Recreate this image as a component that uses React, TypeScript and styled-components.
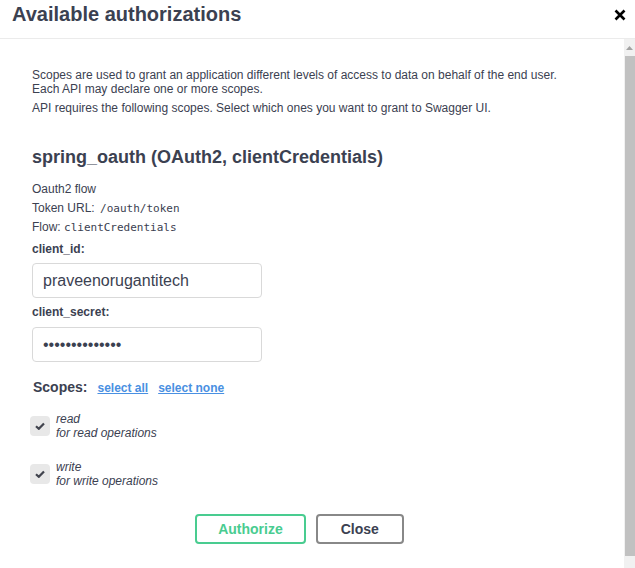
import React from "react";
import styled, { createGlobalStyle, css } from "styled-components";

const GlobalStyle = createGlobalStyle`
  html, body {
    margin: 0;
    padding: 0;
    background: #ffffff;
  }
  body {
    font-family: "Liberation Sans", Arial, sans-serif;
    color: #3b4151;
  }
  * { box-sizing: border-box; }
`;

const Page = styled.div`
  width: 635px;
  height: 568px;
  display: flex;
  flex-direction: column;
  overflow: hidden;
  background: #fff;
`;

const Header = styled.div`
  height: 39px;
  flex: none;
  display: flex;
  justify-content: space-between;
  align-items: flex-start;
  padding: 2px 0 0 12px;
  border-bottom: 1px solid #ebebeb;
`;

const Title = styled.h3`
  margin: 0;
  font-size: 20px;
  line-height: 24px;
  font-weight: 700;
  color: #3b4151;
`;

const CloseIcon = styled.button`
  margin: 7px 9px 0 0;
  padding: 0;
  width: 12px;
  height: 12px;
  border: none;
  background: none;
  display: flex;
  cursor: pointer;
`;

const Body = styled.div`
  flex: 1;
  min-height: 0;
  display: flex;
`;

const Content = styled.div`
  flex: 1;
  padding: 29px 0 0 32px;
  overflow: hidden;
`;

const Para = styled.p<{ $mt?: number }>`
  margin: ${(p) => p.$mt ?? 0}px 0 0;
  font-size: 12px;
  line-height: 14px;
  color: #3b4151;
`;

const SchemeTitle = styled.h4`
  margin: 31px 0 0;
  font-size: 18px;
  line-height: 22px;
  font-weight: 700;
  color: #3b4151;
`;

const FlowInfo = styled.div`
  margin-top: 12px;
  font-size: 12px;
  line-height: 19px;
`;

const FlowLine = styled.div`
  white-space: pre;
`;

const Code = styled.code<{ $pad?: number }>`
  font-family: "DejaVu Sans Mono", "Liberation Mono", monospace;
  font-size: 11px;
  padding-left: ${(p) => p.$pad ?? 0}px;
`;

const FieldLabel = styled.label<{ $mt: number }>`
  display: block;
  margin-top: ${(p) => p.$mt}px;
  font-size: 12px;
  line-height: 14px;
  font-weight: 700;
  color: #3b4151;
`;

const TextInput = styled.input<{ $mt: number }>`
  display: block;
  margin-top: ${(p) => p.$mt}px;
  width: 230px;
  height: 35px;
  padding: 0 10px;
  border: 1px solid #d9d9d9;
  border-radius: 4px;
  background: #fff;
  font-family: "Liberation Sans", Arial, sans-serif;
  font-size: 16px;
  color: #3b4151;
  outline: none;
`;

const ScopesRow = styled.div`
  margin-top: 17px;
  display: flex;
  align-items: baseline;
`;

const ScopesTitle = styled.h2`
  margin: 0 0 0 1px;
  font-size: 14px;
  line-height: 17px;
  font-weight: 700;
  color: #3b4151;
`;

const ScopeLink = styled.a`
  margin-left: 10px;
  font-size: 12px;
  font-weight: 700;
  color: #4990e2;
  text-decoration: underline;
  cursor: pointer;
`;

const ScopeItem = styled.div<{ $mt: number }>`
  margin-top: ${(p) => p.$mt}px;
  display: flex;
  align-items: center;
`;

const CheckBox = styled.span`
  width: 20px;
  height: 20px;
  margin-left: -2px;
  border-radius: 4px;
  background: #e8e8e8;
  display: flex;
  align-items: center;
  justify-content: center;
  flex: none;
`;

const ScopeText = styled.div`
  margin-left: 6px;
  font-size: 12px;
  line-height: 14px;
  font-style: italic;
  color: #3b4151;
`;

const ButtonRow = styled.div`
  margin-top: 26px;
  width: 535px;
  display: flex;
  justify-content: center;
  gap: 10px;
`;

const Btn = styled.button<{ $variant: "authorize" | "close" }>`
  font-family: "Liberation Sans", Arial, sans-serif;
  font-size: 14px;
  line-height: 17px;
  font-weight: 700;
  padding: 5px 21px 4px;
  border-radius: 4px;
  background: transparent;
  border: 2px solid;
  cursor: pointer;
  ${(p) =>
    p.$variant === "authorize"
      ? css`
          color: #49cc90;
          border-color: #49cc90;
        `
      : css`
          color: #3b4151;
          border-color: #888888;
          padding-left: 23px;
          padding-right: 23px;
        `}
`;

const Scrollbar = styled.div`
  width: 11px;
  flex: none;
  display: flex;
  flex-direction: column;
  background: #f1f1f1;
`;

const ScrollArrow = styled.div`
  height: 17px;
  display: flex;
  align-items: center;
  justify-content: center;
`;

const ScrollThumb = styled.div`
  height: 500px;
  margin-left: 1px;
  background: #c1c1c1;
`;

const Check = () => (
  <svg width="10" height="8" viewBox="0 0 10 8">
    <path d="M1 4.2 L3.8 6.8 L9 1.4" fill="none" stroke="#41444e" strokeWidth="2.2" />
  </svg>
);

export default function App() {
  return (
    <>
      <GlobalStyle />
      <Page>
        <Header>
          <Title>Available authorizations</Title>
          <CloseIcon aria-label="close">
            <svg width="12" height="12" viewBox="0 0 12 12">
              <path d="M1.5 1.5 L10.5 10.5 M10.5 1.5 L1.5 10.5" stroke="#000" strokeWidth="2.6" />
            </svg>
          </CloseIcon>
        </Header>
        <Body>
          <Content>
            <Para>
              Scopes are used to grant an application different levels of access to data on behalf of the end user.
              <br />
              Each API may declare one or more scopes.
            </Para>
            <Para $mt={5}>API requires the following scopes. Select which ones you want to grant to Swagger UI.</Para>
            <SchemeTitle>spring_oauth (OAuth2, clientCredentials)</SchemeTitle>
            <FlowInfo>
              <FlowLine>Oauth2 flow</FlowLine>
              <FlowLine>
                Token URL: <Code $pad={2}>/oauth/token</Code>
              </FlowLine>
              <FlowLine>
                Flow: <Code>clientCredentials</Code>
              </FlowLine>
            </FlowInfo>
            <FieldLabel $mt={5}>client_id:</FieldLabel>
            <TextInput $mt={7} type="text" defaultValue="praveenorugantitech" />
            <FieldLabel $mt={7}>client_secret:</FieldLabel>
            <TextInput $mt={8} type="password" defaultValue="abcdefghijklmn" />
            <ScopesRow>
              <ScopesTitle>Scopes:</ScopesTitle>
              <ScopeLink>select all</ScopeLink>
              <ScopeLink>select none</ScopeLink>
            </ScopesRow>
            <ScopeItem $mt={16}>
              <CheckBox>
                <Check />
              </CheckBox>
              <ScopeText>
                read
                <br />
                for read operations
              </ScopeText>
            </ScopeItem>
            <ScopeItem $mt={20}>
              <CheckBox>
                <Check />
              </CheckBox>
              <ScopeText>
                write
                <br />
                for write operations
              </ScopeText>
            </ScopeItem>
            <ButtonRow>
              <Btn $variant="authorize">Authorize</Btn>
              <Btn $variant="close">Close</Btn>
            </ButtonRow>
          </Content>
          <Scrollbar>
            <ScrollArrow>
              <svg width="7" height="4" viewBox="0 0 7 4">
                <path d="M0 4 L3.5 0 L7 4 Z" fill="#a3a3a3" />
              </svg>
            </ScrollArrow>
            <ScrollThumb />
          </Scrollbar>
        </Body>
      </Page>
    </>
  );
}
